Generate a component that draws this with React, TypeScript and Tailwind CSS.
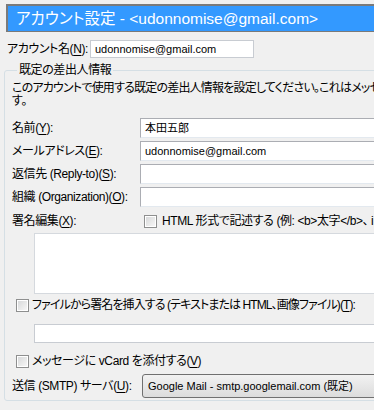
import React from "react";

const ui = "font-['Liberation_Sans','Noto_Sans_CJK_JP',sans-serif] [font-feature-settings:'palt']";

function U({ c }: { c: string }) {
    return <span className="underline underline-offset-2">{c}</span>;
}

function Check() {
    return (
        <span className="inline-block w-[13px] h-[13px] shrink-0 border border-[#8e8f8f] bg-white p-[1px]">
            <span className="block w-full h-full bg-gradient-to-br from-[#d8d9da] to-[#f6f6f6]" />
        </span>
    );
}

function Field({ value }: { value?: string }) {
    return (
        <div className="h-[20px] w-[300px] border border-[#abadb3] border-b-[#e3e9ef] border-r-[#dbdfe6] bg-white pl-[4px] flex items-center text-[11px] tracking-normal">
            {value}
        </div>
    );
}

export default function App() {
    const rows = [
        { label: <>名前(<U c="Y" />):</>, value: "本田五郎" },
        { label: <>メールアドレス(<U c="E" />):</>, value: "udonnomise@gmail.com" },
        { label: <>返信先 (Reply-to)(<U c="S" />):</>, value: "" },
        { label: <>組織 (Organization)(<U c="O" />):</>, value: "" },
    ];

    return (
        <div className={`w-[374px] h-[410px] overflow-hidden bg-[#f0f0f0] text-[12px] leading-[14px] tracking-[-0.4px] text-black ${ui}`}>
            {/* title bar */}
            <div className="ml-[6px] mt-[4px] w-[380px] h-[28px] border-t-2 border-l-2 border-b border-[#7a7a7a] bg-[#3399ff] flex items-center pl-[8px]">
                <span className="text-white text-[15.5px] tracking-normal whitespace-nowrap">
                    アカウント設定 - &lt;udonnomise@gmail.com&gt;
                </span>
            </div>

            {/* account name */}
            <div className="mt-[8px] flex items-center h-[18px]">
                <span className="pl-[7px] w-[90px] whitespace-nowrap">アカウント名(<U c="N" />):</span>
                <div className="h-[18px] w-[164px] border border-[#c8ccd2] bg-white pl-[4px] flex items-center text-[11px] tracking-normal">
                    udonnomise@gmail.com
                </div>
            </div>

            {/* group */}
            <fieldset className="ml-[4px] mt-[5px] w-[420px] h-[338px] border border-[#d5dfe5] rounded-[3px] pl-[7px] pr-0">
                <legend className="ml-[5px] px-[2px] leading-[14px]">既定の差出人情報</legend>

                <p className="mt-[5px] w-[420px] leading-[13px] whitespace-nowrap tracking-[-0.8px]">
                    このアカウントで使用する既定の差出人情報を設定してください。これはメッセージの送信者として表示されます。
                </p>
                <p className="leading-[13px]">す。</p>

                <div className="mt-[10px] flex flex-col gap-[3px]">
                    {rows.map((r, i) => (
                        <div key={i} className="flex items-center">
                            <span className="w-[128px] whitespace-nowrap">{r.label}</span>
                            <Field value={r.value} />
                        </div>
                    ))}
                </div>

                <div className="mt-[7px] flex items-center h-[14px]">
                    <span className="w-[132px] whitespace-nowrap">署名編集(<U c="X" />):</span>
                    <Check />
                    <span className="ml-[5px] whitespace-nowrap">
                        HTML 形式で記述する (例: &lt;b&gt;太字&lt;/b&gt;、 i
                    </span>
                </div>

                <div className="mt-[5px] ml-[22px] h-[61px] w-[360px] border border-[#d5d9de] bg-white" />

                <div className="mt-[4px] ml-[4px] flex items-center h-[14px]">
                    <Check />
                    <span className="ml-[3px] whitespace-nowrap tracking-[-0.9px]">
                        ファイルから署名を挿入する (テキストまたは HTML、画像ファイル)(<U c="T" />):
                    </span>
                </div>

                <div className="mt-[12px] ml-[22px] h-[19px] w-[360px] border border-[#c8ccd2] bg-white" />

                <div className="mt-[11px] ml-[4px] flex items-center h-[14px]">
                    <Check />
                    <span className="ml-[3px] whitespace-nowrap">
                        メッセージに vCard を添付する(<U c="V" />)
                    </span>
                </div>

                <div className="mt-[6px] flex items-center">
                    <span className="w-[130px] whitespace-nowrap">送信 (SMTP) サーバ(<U c="U" />):</span>
                    <div className="h-[24px] w-[300px] rounded-[3px] border border-[#707070] bg-gradient-to-b from-[#f2f2f2] to-[#dcdcdc] flex items-center pl-[5px] whitespace-nowrap text-[11px] tracking-normal">
                        Google Mail - smtp.googlemail.com (既定)
                    </div>
                </div>
            </fieldset>
        </div>
    );
}
